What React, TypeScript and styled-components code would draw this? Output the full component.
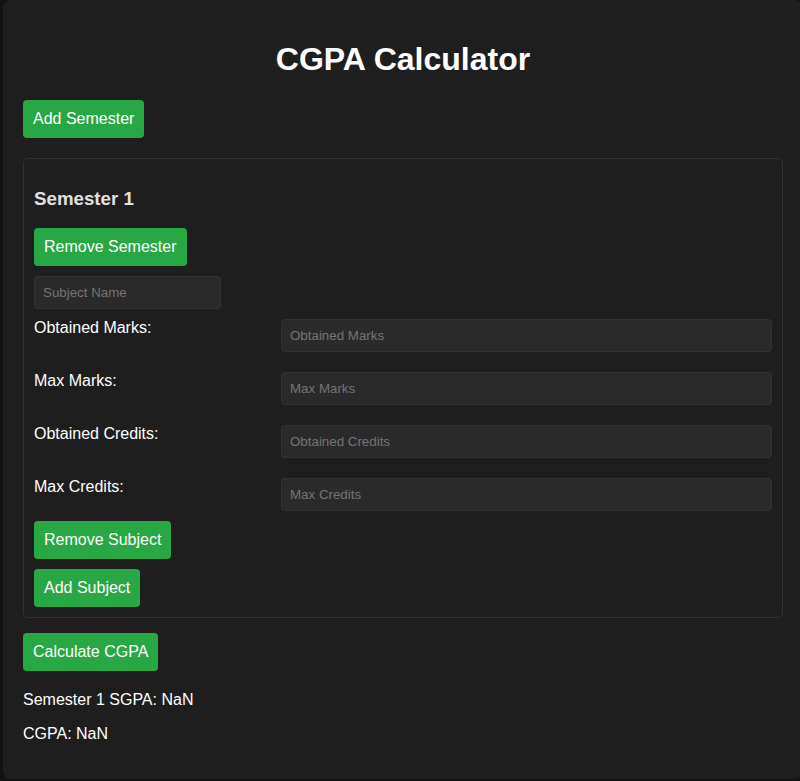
import React from "react";
import styled, { createGlobalStyle } from "styled-components";

const Global = createGlobalStyle`
  html, body { margin: 0; padding: 0; background: #121212; }
  body { font-family: "Liberation Sans", Arial, sans-serif; color: #ffffff; }
`;

const Container = styled.div`
  box-sizing: border-box;
  width: 800px;
  height: 779px;
  margin-left: 3px;
  padding: 20px;
  background: #1e1e1e;
  border-radius: 8px;
  overflow: hidden;
`;

const Title = styled.h1`
  margin: 21px 0 22px;
  font-size: 32px;
  font-weight: bold;
  text-align: center;
  color: #ffffff;
  line-height: 37px;
`;

const Button = styled.button<{ $mb?: number }>`
  display: block;
  box-sizing: border-box;
  height: 38px;
  padding: 0 10px;
  border: none;
  border-radius: 4px;
  background: #28a745;
  color: #ffffff;
  font-family: "Liberation Sans", Arial, sans-serif;
  font-size: 16px;
  cursor: pointer;
  margin-bottom: ${(p) => (p.$mb ?? 0)}px;
`;

const Card = styled.div`
  box-sizing: border-box;
  margin: 20px 0 15px;
  padding: 10px;
  border: 1px solid #333333;
  border-radius: 5px;
  display: flex;
  flex-direction: column;
  align-items: flex-start;
`;

const SemTitle = styled.h3`
  margin: 19px 0 19px;
  font-size: 18.72px;
  line-height: 21px;
  font-weight: bold;
  color: #e0e0e0;
`;

const Input = styled.input<{ $w?: string }>`
  box-sizing: border-box;
  width: ${(p) => p.$w ?? "100%"};
  height: 33px;
  padding: 0 8px;
  background: #2a2a2a;
  border: 1px solid #333333;
  border-radius: 4px;
  color: #e0e0e0;
  font-family: "Liberation Sans", Arial, sans-serif;
  font-size: 13.33px;
  outline: none;
  &::placeholder { color: #757575; }
`;

const Rows = styled.div`
  align-self: stretch;
  display: flex;
  flex-direction: column;
  gap: 18px;
  margin: 8px 0 10px;
`;

const Row = styled.div`
  display: grid;
  grid-template-columns: 247px 1fr;
  align-items: start;
`;

const Label = styled.label`
  padding-top: 2px;
  font-size: 16px;
  line-height: 18px;
  color: #ffffff;
`;

const RowInput = styled(Input)`
  margin-top: 2px;
`;

const Result = styled.p<{ $mt?: number }>`
  margin: ${(p) => p.$mt ?? 16}px 0 16px;
  font-size: 16px;
  line-height: 18px;
  color: #ffffff;
`;

const fields = ["Obtained Marks", "Max Marks", "Obtained Credits", "Max Credits"];

export default function App() {
  return (
    <>
      <Global />
      <Container>
        <Title>CGPA Calculator</Title>
        <Button>Add Semester</Button>
        <Card>
          <SemTitle>Semester 1</SemTitle>
          <Button $mb={10}>Remove Semester</Button>
          <Input $w="187px" placeholder="Subject Name" />
          <Rows>
            {fields.map((f) => (
              <Row key={f}>
                <Label>{f}:</Label>
                <RowInput placeholder={f} />
              </Row>
            ))}
          </Rows>
          <Button $mb={10}>Remove Subject</Button>
          <Button>Add Subject</Button>
        </Card>
        <Button>Calculate CGPA</Button>
        <Result $mt={20}>Semester 1 SGPA: NaN</Result>
        <Result>CGPA: NaN</Result>
      </Container>
    </>
  );
}
